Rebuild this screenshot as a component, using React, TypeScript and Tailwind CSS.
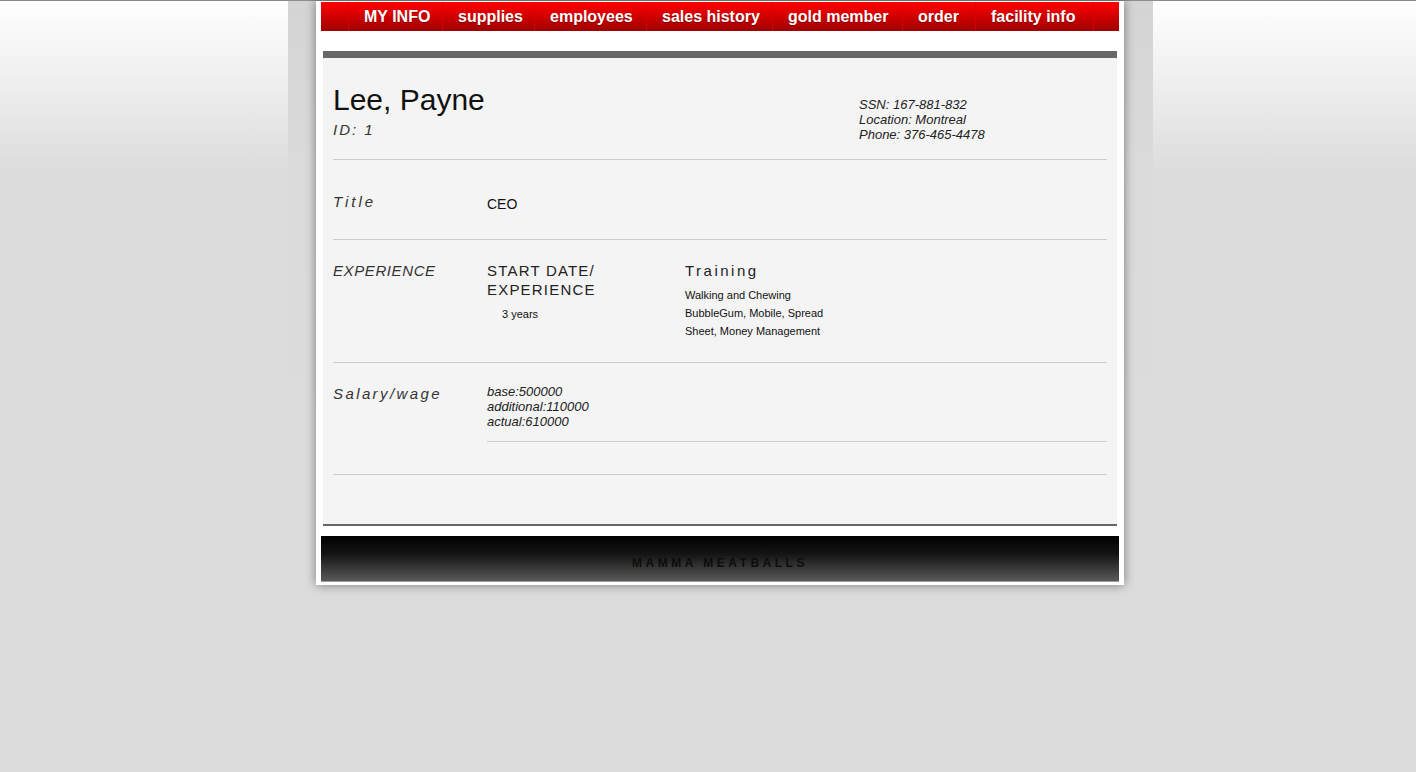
import React from "react";

const navItems: { label: string; w: string }[] = [
  { label: "MY INFO", w: "w-[94px]" },
  { label: "supplies", w: "w-[92px]" },
  { label: "employees", w: "w-[112px]" },
  { label: "sales history", w: "w-[126px]" },
  { label: "gold member", w: "w-[130px]" },
  { label: "order", w: "w-[73px]" },
  { label: "facility info", w: "w-[118px]" },
];

export default function App() {
  return (
    <div className="min-h-screen w-full border-t border-[#8c8c8c] bg-[linear-gradient(to_bottom,#ffffff,#dcdcdc_170px,#dcdcdc)] font-['Liberation_Sans',Arial,sans-serif]">
      <div className="ml-[288px] w-[865px] bg-[linear-gradient(to_bottom,#d4d4d4,#dbdbdb_170px,#dcdcdc)] px-[28px]">
        <div className="w-[808px] bg-white px-[5px] pt-px pb-[3px] shadow-[0_0_10px_rgba(0,0,0,0.45)]">
          {/* nav */}
          <nav className="flex h-[29px] bg-[linear-gradient(to_bottom,#ff0000,#e00000_35%,#9e0000)]">
            <div className="w-[27px]" />
            {navItems.map((n) => (
              <div
                key={n.label}
                className={`${n.w} flex items-center border-l border-[#d80000] pl-[15px] text-[16px] font-bold text-white [text-shadow:0_1px_1px_rgba(0,0,0,0.35)] whitespace-nowrap`}
              >
                {n.label}
              </div>
            ))}
            <div className="flex-1 border-l border-[#d80000]" />
          </nav>

          {/* content */}
          <div className="mx-[2px] mt-[20px] border-t-[7px] border-b-2 border-[#666666] bg-[#f4f4f4] px-[10px] pb-[49px]">
            {/* header */}
            <div className="flex justify-between border-b border-[#cccccc] pt-[24px] pb-[17px]">
              <div>
                <h1 className="text-[30px] leading-[36px] text-[#111111]">Lee, Payne</h1>
                <div className="mt-[3px] text-[15px] leading-[18px] italic tracking-[2px] text-[#333333]">ID: 1</div>
              </div>
              <div className="mt-[15px] w-[248px] text-[13px] leading-[15px] italic text-[#222222]">
                <div>SSN: 167-881-832</div>
                <div>Location: Montreal</div>
                <div>Phone: 376-465-4478</div>
              </div>
            </div>

            {/* title row */}
            <div className="flex items-start border-b border-[#cccccc] pt-[32px] pb-[25px]">
              <div className="w-[154px] text-[15px] leading-[20px] italic tracking-[3px] text-[#333333]">Title</div>
              <div className="mt-[2px] text-[14px] leading-[20px] text-[#111111]">CEO</div>
            </div>

            {/* experience row */}
            <div className="flex items-start border-b border-[#cccccc] pt-[21px] pb-[22px]">
              <div className="w-[154px] text-[15px] leading-[20px] italic tracking-[0.6px] text-[#333333]">EXPERIENCE</div>
              <div className="w-[198px]">
                <div className="text-[15px] leading-[19px] tracking-[1.2px] text-[#222222]">
                  START DATE/
                  <br />
                  EXPERIENCE
                </div>
                <div className="mt-[6px] pl-[15px] text-[11px] leading-[18px] text-[#111111]">3 years</div>
              </div>
              <div className="w-[150px]">
                <div className="text-[15px] leading-[19px] tracking-[2.5px] text-[#222222]">Training</div>
                <div className="mt-[6px] text-[11px] leading-[18px] text-[#111111]">
                  Walking and Chewing BubbleGum, Mobile, Spread Sheet, Money Management
                </div>
              </div>
            </div>

            {/* salary row */}
            <div className="flex items-start border-b border-[#cccccc] pt-[21px] pb-[32px]">
              <div className="w-[154px] text-[15px] leading-[20px] italic tracking-[2.4px] text-[#333333]">Salary/wage</div>
              <div className="flex-1 border-b border-[#cccccc] pb-[12px] text-[13px] leading-[15px] italic text-[#222222]">
                <div>base:500000</div>
                <div>additional:110000</div>
                <div>actual:610000</div>
              </div>
            </div>
          </div>

          {/* footer */}
          <footer className="mt-[10px] flex h-[46px] items-center justify-center border-b border-[#9a9a9a] bg-[linear-gradient(to_bottom,#000000,#141414_40%,#595959)] pt-[8px]">
            <span className="text-[12px] font-bold tracking-[3.5px] text-[#0d0d0d]">MAMMA MEATBALLS</span>
          </footer>
        </div>
      </div>
    </div>
  );
}
